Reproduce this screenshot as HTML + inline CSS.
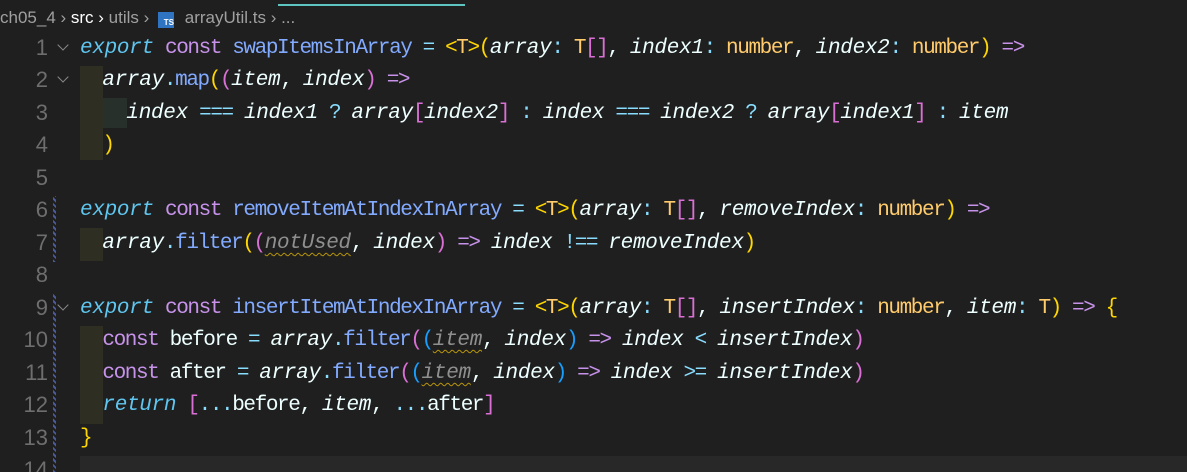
<!DOCTYPE html>
<html><head><meta charset="utf-8"><style>
html,body{margin:0;padding:0;background:#1f1f1f;width:1187px;height:472px;overflow:hidden;position:relative;font-family:"Liberation Mono",monospace}
.bc{position:absolute;top:8px;left:0;font-family:"Liberation Sans",sans-serif;font-size:17px;color:#a0a0a0;white-space:nowrap}
.bc .w{color:#fff}
.ln{position:absolute;left:0;width:48px;text-align:right;font-size:22px;color:#6e6e6e;height:32px;line-height:32px;font-family:"Liberation Sans",sans-serif}
.code{position:absolute;left:80px;font-size:21px;letter-spacing:-1.4px;white-space:pre;height:32px;line-height:32px;color:#eeffff;top:0}
.k,.p,.u{letter-spacing:-0.3px}
.k{color:#5fc6ef;font-style:italic}.c{color:#c792ea}.f{color:#82aaff}.o{color:#89ddff}.p{color:#eeffff;font-style:italic}
.y{color:#ffd700}.m{color:#da70d6}.b{color:#179fff}.t{color:#ffcb6b}.a{color:#c792ea}
.u{color:#8f8f8f;font-style:italic;text-decoration:underline wavy #b8960a;text-decoration-thickness:1px;text-underline-offset:4px}
.chev{position:absolute;left:59px;width:7px;height:7px;border-right:1.5px solid #8a8a8a;border-bottom:1.5px solid #8a8a8a;transform:rotate(45deg)}
.hatch{position:absolute;left:53px;width:3px;background:repeating-linear-gradient(45deg,#4a5a9a 0 2px,#1f1f1f 2px 4px)}
</style></head><body>
<div style="position:absolute;left:278px;top:4px;width:187px;height:2px;background:#5ec4c0"></div>
<div class="bc"><span>ch05_4 &#x203A; </span><span class="w">src</span><span class="w"> &#x203A; </span><span>utils &#x203A; </span><span style="display:inline-block;width:16px;height:16px;background:#2f74c0;vertical-align:-2px;margin:0 6px 0 4px;font-size:8px;color:#fff;line-height:22px;text-align:right;font-weight:bold">TS</span><span> arrayUtil.ts &#x203A; ...</span></div>
<div style="position:absolute;left:80px;top:456px;width:1107px;height:16px;background:#282828"></div>
<div style="position:absolute;left:80px;top:66px;width:23px;height:94px;background:#2e2e23"></div>
<div style="position:absolute;left:103px;top:98px;width:24px;height:30px;background:#27302a"></div>
<div style="position:absolute;left:80px;top:228px;width:23px;height:33px;background:#2e2e23"></div>
<div style="position:absolute;left:80px;top:326px;width:23px;height:98px;background:#2e2e23"></div>
<div class="hatch" style="top:196px;height:66px"></div>
<div class="hatch" style="top:294px;height:178px"></div>
<div class="chev" style="top:41px"></div><div class="chev" style="top:73px"></div><div class="chev" style="top:301px"></div>

<div class="ln" style="top:32px">1</div><div class="ln" style="top:64px">2</div><div class="ln" style="top:97px">3</div><div class="ln" style="top:129px">4</div><div class="ln" style="top:162px">5</div><div class="ln" style="top:194px">6</div><div class="ln" style="top:227px">7</div><div class="ln" style="top:259px">8</div><div class="ln" style="top:292px">9</div><div class="ln" style="top:324px">10</div><div class="ln" style="top:357px">11</div><div class="ln" style="top:389px">12</div><div class="ln" style="top:422px">13</div><div class="ln" style="top:454px">14</div>

<div class="code" style="top:33px"><span class="k">export</span> <span class="c">const</span> <span class="f">swapItemsInArray</span> <span class="o">=</span> <span class="y">&lt;</span><span class="t">T</span><span class="y">&gt;(</span><span class="p">array</span><span class="o">:</span> <span class="t">T</span><span class="m">[]</span>, <span class="p">index1</span><span class="o">:</span> <span class="t">number</span>, <span class="p">index2</span><span class="o">:</span> <span class="t">number</span><span class="y">)</span> <span class="a">=&gt;</span></div>
<div class="code" style="top:65px">  <span class="p">array</span><span class="o">.</span><span class="f">map</span><span class="y">(</span><span class="m">(</span><span class="p">item</span>, <span class="p">index</span><span class="m">)</span> <span class="a">=&gt;</span></div>
<div class="code" style="top:98px;left:104px">  <span class="p">index</span> <span class="o">===</span> <span class="p">index1</span> <span class="o">?</span> <span class="p">array</span><span class="m">[</span><span class="p">index2</span><span class="m">]</span> <span class="o">:</span> <span class="p">index</span> <span class="o">===</span> <span class="p">index2</span> <span class="o">?</span> <span class="p">array</span><span class="m">[</span><span class="p">index1</span><span class="m">]</span> <span class="o">:</span> <span class="p">item</span></div>
<div class="code" style="top:130px">  <span class="y">)</span></div>
<div class="code" style="top:195px"><span class="k">export</span> <span class="c">const</span> <span class="f">removeItemAtIndexInArray</span> <span class="o">=</span> <span class="y">&lt;</span><span class="t">T</span><span class="y">&gt;(</span><span class="p">array</span><span class="o">:</span> <span class="t">T</span><span class="m">[]</span>, <span class="p">removeIndex</span><span class="o">:</span> <span class="t">number</span><span class="y">)</span> <span class="a">=&gt;</span></div>
<div class="code" style="top:228px">  <span class="p">array</span><span class="o">.</span><span class="f">filter</span><span class="y">(</span><span class="m">(</span><span class="u">notUsed</span>, <span class="p">index</span><span class="m">)</span> <span class="a">=&gt;</span> <span class="p">index</span> <span class="o">!==</span> <span class="p">removeIndex</span><span class="y">)</span></div>
<div class="code" style="top:293px"><span class="k">export</span> <span class="c">const</span> <span class="f">insertItemAtIndexInArray</span> <span class="o">=</span> <span class="y">&lt;</span><span class="t">T</span><span class="y">&gt;(</span><span class="p">array</span><span class="o">:</span> <span class="t">T</span><span class="m">[]</span>, <span class="p">insertIndex</span><span class="o">:</span> <span class="t">number</span>, <span class="p">item</span><span class="o">:</span> <span class="t">T</span><span class="y">)</span> <span class="a">=&gt;</span> <span class="y">{</span></div>
<div class="code" style="top:325px">  <span class="c">const</span> before <span class="o">=</span> <span class="p">array</span><span class="o">.</span><span class="f">filter</span><span class="m">(</span><span class="b">(</span><span class="u">item</span>, <span class="p">index</span><span class="b">)</span> <span class="a">=&gt;</span> <span class="p">index</span> <span class="o">&lt;</span> <span class="p">insertIndex</span><span class="m">)</span></div>
<div class="code" style="top:358px">  <span class="c">const</span> after <span class="o">=</span> <span class="p">array</span><span class="o">.</span><span class="f">filter</span><span class="m">(</span><span class="b">(</span><span class="u">item</span>, <span class="p">index</span><span class="b">)</span> <span class="a">=&gt;</span> <span class="p">index</span> <span class="o">&gt;=</span> <span class="p">insertIndex</span><span class="m">)</span></div>
<div class="code" style="top:390px">  <span class="k">return</span> <span class="m">[</span><span class="o">...</span>before, <span class="p">item</span>, <span class="o">...</span>after<span class="m">]</span></div>
<div class="code" style="top:423px"><span class="y">}</span></div>
</body></html>
